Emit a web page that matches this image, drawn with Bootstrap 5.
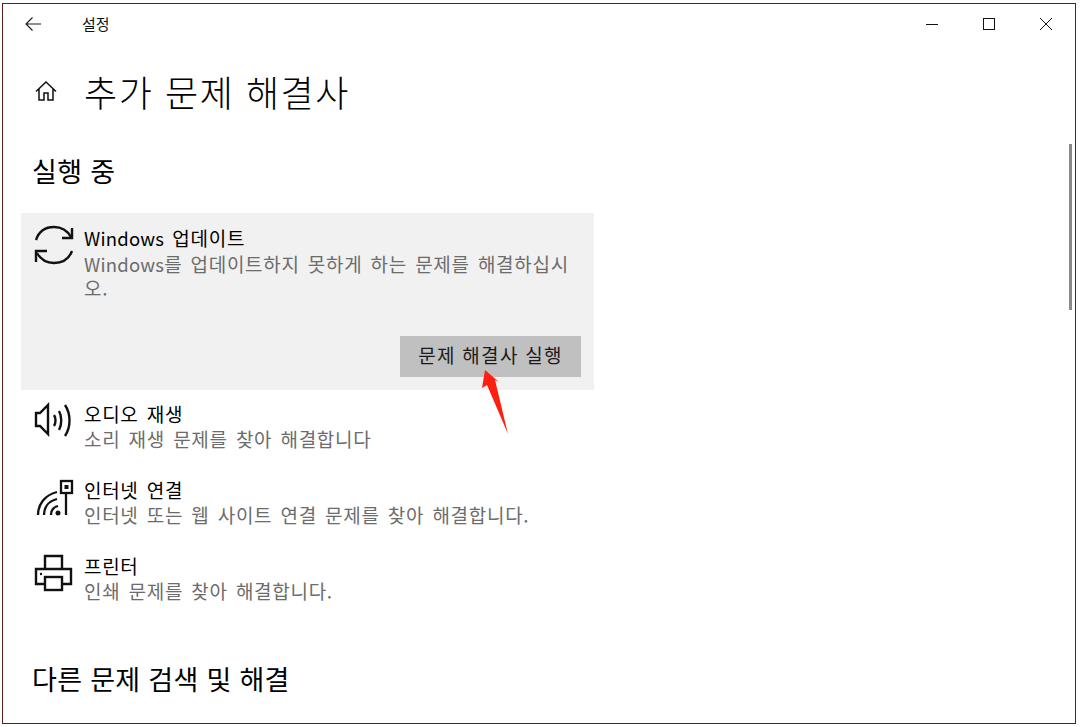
<!DOCTYPE html>
<html lang="ko">
<head>
<meta charset="utf-8">
<title>설정</title>
<link href="https://cdn.jsdelivr.net/npm/bootstrap@5.3.0/dist/css/bootstrap.min.css" rel="stylesheet">
<style>
html,body{height:100%;background:#fff;overflow:hidden}
body{font-family:"Noto Sans CJK KR","Noto Sans",sans-serif;padding:3px 5px 3px 2px;color:#000}
.win-frame{height:721px;border:1px solid #5c1f18;position:relative;overflow:hidden;background:#fff}
.title-bar{height:40px;padding-left:20px;padding-right:1px}
.title-bar .app-name{font-size:15px;margin-left:39px;line-height:40px;color:#111}
.win-btn{width:57px;display:flex;justify-content:center}
.head-row{margin-top:17px;padding-left:31px;height:60px}
.page-title{font-size:36px;font-weight:300;margin:0 0 0 26px;letter-spacing:1.55px;line-height:60px}
.sec-title{font-size:27px;font-weight:400;margin:0;padding-left:29px;line-height:36px;letter-spacing:.3px}
.sec-one{margin-top:32px}
.items{width:573px;margin:24px 0 0 18px}
.item-box{padding:11px 13px 0 13px}
.item-on{background:#f1f1f1;height:177px;padding-bottom:13px}
.item-ico{width:37px;flex:none;margin-right:13px}
.item-name{font-size:19px;line-height:27px;letter-spacing:.7px;word-spacing:2.200px}
.item-desc{font-size:19px;line-height:24px;color:#6c6c6c;letter-spacing:.7px;word-spacing:2.200px}
.latin-run{font-size:18.500px;letter-spacing:.2px}
.item-plain{height:76px;padding-top:10px}
.run-btn{background:#c0c0c0;color:#1a1a1a;border:0;border-radius:0;width:181px;height:41px;font-size:19px;padding:0 0 2px;letter-spacing:1.3px}
.run-btn:hover{background:#c0c0c0}
.sec-two{margin-top:43px}
.scroll-thumb{position:absolute;right:3px;top:140px;width:3px;height:166px;background:#8a8a8a}
.red-arrow{position:absolute;left:479px;top:366px}
</style>
</head>
<body>
<div class="win-frame">
  <div class="title-bar d-flex align-items-center">
    <svg width="20" height="16" viewBox="0 0 20 16" fill="none" stroke="#222" stroke-width="1.2"><path d="M3 8H18M9.500 1.500 3 8l6.500 6.500"/></svg>
    <span class="app-name">설정</span>
    <div class="win-btns d-flex align-items-center ms-auto">
      <span class="win-btn"><svg width="14" height="14" viewBox="0 0 14 14" stroke="#111" stroke-width="1"><path d="M1 7.500H13"/></svg></span>
      <span class="win-btn"><svg width="14" height="14" viewBox="0 0 14 14" fill="none" stroke="#111" stroke-width="1"><rect x="1.500" y="1.500" width="11" height="11"/></svg></span>
      <span class="win-btn"><svg width="14" height="14" viewBox="0 0 14 14" stroke="#111" stroke-width="1"><path d="M1 1 13 13M13 1 1 13"/></svg></span>
    </div>
  </div>

  <div class="head-row d-flex align-items-center">
    <svg width="24" height="24" viewBox="0 0 24 24" fill="none" stroke="#111" stroke-width="1.500"><path d="M2 12.500 12 3l10 9.500M5 10v11h5v-7h4v7h5V10"/></svg>
    <h1 class="page-title">추가 문제 해결사</h1>
  </div>

  <h2 class="sec-title sec-one">실행 중</h2>

  <div class="items">
    <div class="item-box item-on d-flex flex-column">
      <div class="d-flex">
        <div class="item-ico">
          <svg width="40" height="42" viewBox="0 0 40 42" fill="none" stroke="#111" stroke-width="2.400"><path d="M2 16C5 7 12 3 20 3c7 0 13 3 17 10"/><path d="M38 4v10H28"/><path d="M38 27c-3 8-10 12-18 12-7 0-13-3-17-10"/><path d="M2 38V27h11"/></svg>
        </div>
        <div>
          <div class="item-name"><span class="latin-run">Windows</span> 업데이트</div>
          <div class="item-desc"><span class="latin-run">Windows</span>를 업데이트하지 못하게 하는 문제를 해결하십시오.</div>
        </div>
      </div>
      <div class="mt-auto d-flex justify-content-end">
        <button type="button" class="btn run-btn">문제 해결사 실행</button>
      </div>
    </div>

    <div class="item-box item-plain d-flex">
      <div class="item-ico">
        <svg width="40" height="38" viewBox="0 -2 40 38" fill="none" stroke="#111" stroke-width="2.400"><path d="M2 11v13h4l8 8V3l-8 8z"/><path d="M20 13c2 3 2 8 0 11M25 9c3 5 3 14 0 19M31 3c6 9 6 22 0 31"/></svg>
      </div>
      <div>
        <div class="item-name">오디오 재생</div>
        <div class="item-desc">소리 재생 문제를 찾아 해결합니다</div>
      </div>
    </div>

    <div class="item-box item-plain d-flex">
      <div class="item-ico">
        <svg width="40" height="40" viewBox="0 -2 40 40" fill="none" stroke="#111" stroke-width="2.300"><path d="M4 37C4 26 11 17 23 14M10 37c0-8 5-14 13-16M17 37c0-5 3-8 7-9"/><circle cx="24" cy="35" r="2.500" fill="#111" stroke="none"/><path d="M32 37V15"/><rect x="27" y="3" width="11" height="12"/><rect x="30.500" y="7" width="4" height="4" fill="#111" stroke="none"/></svg>
      </div>
      <div>
        <div class="item-name">인터넷 연결</div>
        <div class="item-desc">인터넷 또는 웹 사이트 연결 문제를 찾아 해결합니다.</div>
      </div>
    </div>

    <div class="item-box item-plain d-flex">
      <div class="item-ico">
        <svg width="40" height="40" viewBox="0 -2 40 40" fill="none" stroke="#111" stroke-width="2.400"><path d="M11 15V2h17v13"/><path d="M11 30H2V15h35v15h-9"/><rect x="11" y="23" width="17" height="13"/><circle cx="7" cy="20" r="1.200" fill="#111" stroke="none"/></svg>
      </div>
      <div>
        <div class="item-name">프린터</div>
        <div class="item-desc">인쇄 문제를 찾아 해결합니다.</div>
      </div>
    </div>
  </div>

  <h2 class="sec-title sec-two">다른 문제 검색 및 해결</h2>

  <div class="scroll-thumb"></div>
  <svg class="red-arrow" width="27" height="65" viewBox="0 0 27 65"><path fill="#ff1f10" d="M3 0 17 12l-4-2 13 54L5 15l-5 3z"/></svg>
</div>
</body>
</html>
